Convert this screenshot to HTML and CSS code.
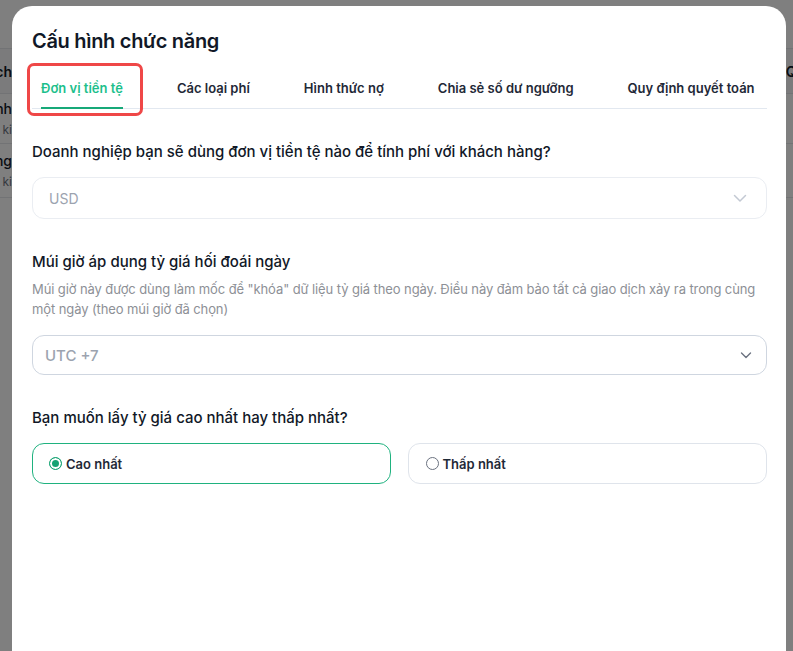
FILE: index.html
```html
<!DOCTYPE html>
<html lang="vi">
<head>
  <meta charset="UTF-8">
  <title>Cấu hình chức năng</title>
  <link rel="stylesheet" href="styles.css">
</head>
<body>
  <!-- trang phía sau modal -->
  <div class="page">
    <div class="page-row page-head">
      <span class="cell-left">Danh sách</span>
      <span class="cell-right">Quy định</span>
    </div>
    <div class="page-row">
      <div class="cell-left">
        <div class="row-title">Định danh</div>
        <div class="row-sub">Theo ki</div>
      </div>
    </div>
    <div class="page-row">
      <div class="cell-left">
        <div class="row-title">Ngưỡng</div>
        <div class="row-sub">Theo ki</div>
      </div>
    </div>
  </div>

  <div class="overlay"></div>

  <div class="modal">
    <h1 class="modal-title">Cấu hình chức năng</h1>

    <div class="tabs">
      <div class="tab active">Đơn vị tiền tệ<span class="highlight"></span></div>
      <div class="tab">Các loại phí</div>
      <div class="tab">Hình thức nợ</div>
      <div class="tab">Chia sẻ số dư ngưỡng</div>
      <div class="tab">Quy định quyết toán</div>
    </div>

    <div class="field">
      <div class="label">Doanh nghiệp bạn sẽ dùng đơn vị tiền tệ nào để tính phí với khách hàng?</div>
      <div class="select disabled">
        <span>USD</span>
        <svg width="14" height="14" viewBox="0 0 14 14"><path d="M1.5 4.5 L7 10 L12.5 4.5" fill="none" stroke="#c3c9d3" stroke-width="1.5" stroke-linecap="round" stroke-linejoin="round"/></svg>
      </div>
    </div>

    <div class="field">
      <div class="label">Múi giờ áp dụng tỷ giá hối đoái ngày</div>
      <div class="desc">Múi giờ này được dùng làm mốc để "khóa" dữ liệu tỷ giá theo ngày. Điều này đảm bảo tất cả giao dịch xảy ra trong cùng một ngày (theo múi giờ đã chọn)</div>
      <div class="select timezone">
        <span>UTC +7</span>
        <svg width="12" height="12" viewBox="0 0 12 12"><path d="M1.5 4 L6 8.5 L10.5 4" fill="none" stroke="#6b7280" stroke-width="1.4" stroke-linecap="round" stroke-linejoin="round"/></svg>
      </div>
    </div>

    <div class="field">
      <div class="label">Bạn muốn lấy tỷ giá cao nhất hay thấp nhất?</div>
      <div class="options">
        <div class="option checked"><span class="radio"></span>Cao nhất</div>
        <div class="option"><span class="radio"></span>Thấp nhất</div>
      </div>
    </div>
  </div>
</body>
</html>
```

FILE: styles.css
```css
* {
  box-sizing: border-box;
}

body {
  margin: 0;
  background: #ffffff;
  font-family: Inter, "Noto Sans", sans-serif;
  color: #111827;
  overflow: hidden;
  height: 651px;
}

/* trang phía sau */
.page {
  padding-top: 48px;
}

.page-row {
  display: flex;
  justify-content: space-between;
  border-top: 1px solid #e5e7eb;
  height: 50px;
  align-items: center;
}

.page-head {
  height: 45px;
  background: #f6f7f9;
  font-size: 14px;
  font-weight: 600;
}

.cell-left {
  width: 100px;
  margin-left: -88px;
  text-align: right;
  white-space: nowrap;
}

.page-head .cell-right {
  margin-right: -54px;
}

.row-title {
  font-size: 14px;
  font-weight: 500;
}

.row-sub {
  font-size: 12px;
  color: #6b7280;
  margin-top: 5px;
}

.page-row:last-child {
  height: 55px;
  border-bottom: 1px solid #e5e7eb;
}

.overlay {
  position: fixed;
  inset: 0;
  background: rgba(0, 0, 0, 0.5);
}

/* modal */
.modal {
  position: fixed;
  top: 6px;
  left: 12px;
  width: 774px;
  height: 700px;
  background: #ffffff;
  border-radius: 20px;
  padding: 21px 19px 0 20px;
}

.modal-title {
  margin: 0;
  font-size: 20px;
  line-height: 28px;
  font-weight: 600;
  color: #111827;
  letter-spacing: -0.3px;
}

.tabs {
  display: flex;
  gap: 54px;
  margin-top: 12px;
  padding-left: 9px;
  border-bottom: 1px solid #e2e8f0;
}

.tab {
  position: relative;
  white-space: nowrap;
  flex-shrink: 0;
  font-size: 13px;
  line-height: 20px;
  font-weight: 600;
  color: #1f2937;
  padding: 11px 0 9px;
  border-bottom: 2px solid transparent;
  margin-bottom: -1px;
}

.tab.active {
  color: #1dbf8c;
  border-bottom-color: #17a979;
}

.highlight {
  position: absolute;
  left: -14px;
  top: -4px;
  width: 116px;
  height: 53px;
  border: 3px solid #ef4747;
  border-radius: 7px;
}

.field {
  margin-top: 31px;
}

.label {
  font-size: 15px;
  line-height: 24px;
  font-weight: 500;
  color: #111827;
}

.desc {
  margin-top: 5px;
  font-size: 13px;
  line-height: 20px;
  letter-spacing: -0.1px;
  color: #8d9096;
}

.select {
  display: flex;
  align-items: center;
  justify-content: space-between;
  margin-top: 13px;
  height: 42px;
  border: 1px solid #eaedf2;
  border-radius: 12px;
  padding: 0 19px 0 16px;
  font-size: 14px;
  color: #9ca3af;
}

.select.timezone {
  margin-top: 16px;
  height: 40px;
  border-color: #cfd6e0;
  padding: 0 14px 0 12px;
  font-size: 15px;
  font-weight: 500;
}

.options {
  display: flex;
  gap: 17px;
  margin-top: 13px;
}

.option {
  flex: 1;
  display: flex;
  align-items: center;
  gap: 4px;
  height: 41px;
  border: 1px solid #dfe4eb;
  border-radius: 12px;
  padding-left: 17px;
  font-size: 13px;
  font-weight: 600;
  color: #1f2937;
}

.option.checked {
  border: 1.5px solid #1fb27f;
  padding-left: 16px;
}

.radio {
  width: 13px;
  height: 13px;
  border-radius: 50%;
  border: 1px solid #6b7280;
  background: #fff;
}

.option.checked .radio {
  border: 1.5px solid #16a373;
  box-shadow: inset 0 0 0 2px #fff;
  background: #16a373;
}
```
